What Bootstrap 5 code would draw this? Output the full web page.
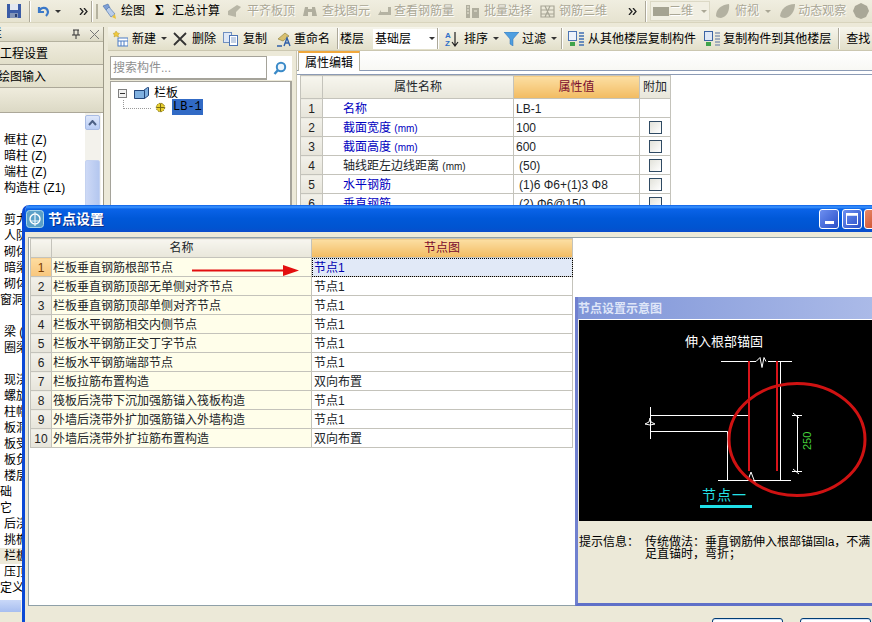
<!DOCTYPE html>
<html lang="zh-CN">
<head>
    <meta charset="UTF-8">
    <title>节点设置</title>
    <link href="https://cdn.jsdelivr.net/npm/bootstrap@5.3.0/dist/css/bootstrap.min.css" rel="stylesheet">
    <style>
        html, body { width: 872px; height: 622px; overflow: hidden; }
        body { position: relative; background: #ece9d8; color: #000; font: 12px/1 "Liberation Sans", "Noto Sans CJK SC", sans-serif; }
        svg { display: block; flex: none; }

        /* spacing between toolbar items, in px */
        .g1 { margin-left: 1px; } .g2 { margin-left: 2px; } .g3 { margin-left: 3px; } .g4 { margin-left: 4px; } .g5 { margin-left: 5px; }
        .g6 { margin-left: 6px; } .g7 { margin-left: 7px; } .g8 { margin-left: 8px; } .g9 { margin-left: 9px; }
        .g10 { margin-left: 10px; } .g11 { margin-left: 11px; } .g18 { margin-left: 18px; } .g21 { margin-left: 21px; }

        .top-bar { height: 23px; padding-left: 6px; background: linear-gradient(#f0eee0, #e6e3d0); border-bottom: 1px solid #d8d4bd; white-space: nowrap; }
        .sub-bar { height: 24px; padding-left: 5px; background: linear-gradient(#f6f5ec, #e2dfc9); border-bottom: 1px solid #cbc7b0; white-space: nowrap; }
        .bar-sep { width: 2px; height: 21px; flex: none; border-left: 1px solid #aca899; border-right: 1px solid #fff; }
        .bar-grip { width: 2px; height: 15px; flex: none; background: #b5b29f; }
        .drop-caret { width: 0; height: 0; flex: none; border-left: 3px solid transparent; border-right: 3px solid transparent; border-top: 3px solid #333; }
        .off { color: #aaa796; text-shadow: 1px 1px 0 #fff; }
        .off .drop-caret { border-top-color: #aaa796; }
        .sigma { width: 9px; font-size: 14px; font-weight: 700; font-family: "Liberation Serif", serif; }
        .view-box { width: 60px; height: 20px; padding-left: 2px; background: #f1efe3; border: 1px solid #dcd9c6; }
        .view-swatch { width: 16px; height: 9px; background: #a5a392; }
        .floor-box { width: 64px; height: 20px; padding-left: 2px; background: #fff; }

        .work-area { height: 598px; }
        .left-dock { width: 104px; flex: none; background: #ece9d8; border-right: 1px solid #9d9a88; }
        .dock-head { height: 15px; padding: 0 4px 0 0; background: linear-gradient(#f2f0e4, #dcd9c5); border-bottom: 1px solid #b5b29f; overflow: hidden; }
        .head-cut { margin-left: -10px; }
        .dock-tab { height: 23px; padding-top: 1px; background: linear-gradient(#efecdd, #e2dfca); border-bottom: 1px solid #aca899; overflow: hidden; white-space: nowrap; }
        .dock-tab-cut { text-indent: -2px; }
        .dock-blank { height: 25px; background: linear-gradient(#efecdd, #dcd9c5); border-bottom: 1px solid #aca899; }
        .dock-list { height: 487px; background: #fff; }
        .dock-tree { padding-top: 19px; width: 85px; overflow: hidden; }
        .tree-line { height: 16px; line-height: 16px; padding-left: 4px; white-space: nowrap; }
        .tree-cut { padding-left: 0; text-indent: -12px; }
        .tree-on { background: #ece9d8; }
        .dock-scroll { width: 16px; background: #f3f2ec; padding-top: 2px; }
        .scroll-up { width: 15px; height: 15px; background: linear-gradient(#dfe8fb, #b9cdf5); border: 1px solid #a9bce4; border-radius: 2px; }
        .scroll-thumb { width: 15px; height: 180px; margin-top: 30px; background: linear-gradient(90deg, #cdd9f6, #b4c7ef); border: 1px solid #c4d2f0; border-radius: 2px; }
        .dock-hscroll { height: 12px; background: #f3f2ec; }
        .hscroll-thumb { width: 21px; height: 12px; background: linear-gradient(#c9d8f8, #a7bef0); }

        .comp-pane { width: 188px; flex: none; padding: 5px 4px 0 2px; }
        .search-wrap { height: 24px; background: #fff; margin-bottom: 1px; }
        .search-field { width: 157px; height: 24px; padding: 0 2px; background: #fff; border: 1px solid #a5a39a; border-bottom-width: 2px; color: #8f8f8f; }
        .comp-tree { height: 540px; background: #fff; border: 1px solid #a5a39a; border-right-width: 2px; padding: 5px 0 0 7px; }
        .fold-box { width: 9px; height: 9px; border: 1px solid #808080; background: #f2f2f2; }
        .dot-l { width: 28px; height: 9px; margin: 0 0 6px 5px; border-left: 1px dotted #999; border-bottom: 1px dotted #999; flex: none; }
        .leaf-on { width: 31px; height: 16px; line-height: 16px; padding-left: 1px; background: #316ac5; font-family: "Liberation Mono", monospace; }
        .leaf-icon { margin-bottom: 2px; }

        .prop-pane { background: #fff; min-width: 0; border-left: 1px solid #c9c6b4; }
        .prop-tabs { height: 20px; padding-left: 1px; border-bottom: 1px solid #8c9bb5; background: linear-gradient(#fff, #f8f8f4); }
        .prop-tab { width: 62px; height: 20px; line-height: 20px; text-align: center; background: #fff; border: 1px solid #b5b29f; border-top: 2px solid #f0a83c; border-bottom: 0; }
        .prop-frame { margin-top: 3px; padding-left: 3px; border-top: 1px solid #8c9bb5; }

        .table.sheet { width: auto; margin: 0; table-layout: fixed; border-collapse: collapse; --bs-table-bg: transparent; }
        .table.sheet th, .table.sheet td { height: 19px; padding: 0 2px; border: 1px solid #c4c3bb; font-size: 12px; font-weight: 400; line-height: 1; vertical-align: middle; white-space: nowrap; overflow: hidden; }
        .table.sheet td { padding-top: 1px; }
        .table.sheet th { text-align: center; background: linear-gradient(#f7f6ef, #e8e6da); }
        .table.sheet th.head-on { background: linear-gradient(#fcdfa3, #f2bb61); color: #7a0c2e; }
        .table.sheet td.num-cell { text-align: center; background: linear-gradient(#f2f1ea, #e6e4da); color: #222; }
        .table.sheet td.num-on { background: linear-gradient(#fddca0, #f8c67c); color: #7a3b00; }
        .table.sheet td.name-cell { padding-left: 1px; background: #fffeea; }
        .table.sheet td.val-on { background: #e1e9f7; color: #0000b0; outline: 1px dotted #000; outline-offset: -1px; }
        .prop-sheet { height: 114px; }
        .prop-sheet th:nth-child(1) { width: 22px; }
        .prop-sheet th:nth-child(2) { width: 191px; }
        .prop-sheet th:nth-child(3) { width: 126px; }
        .prop-sheet th:nth-child(4) { width: 31px; }
        .node-sheet .n-col { width: 21px; }
        .node-sheet .t-col { width: 260px; }
        .node-sheet .v-col { width: 261px; }
        .table.sheet td.attr-blue { padding-left: 20px; color: #0000c0; }
        .table.sheet td.attr-plain { padding-left: 20px; }
        .table.sheet td.val-off { padding-left: 5px; }
        .table.sheet th.pt-head { height: 23px; }
        .mm { font-size: 10px; }
        .chk-cell { text-align: center; }
        .fake-check { display: block; width: 13px; height: 13px; margin: 0 auto; border: 1px solid #2f4a63; background: linear-gradient(135deg, #e2e2da, #fff); }

        /* dialog window sits over the application */
        .node-win { position: absolute; left: 22px; top: 205px; width: 866px; height: 440px; background: #ece9d8; border-left: 3px solid #0b49d6; border-radius: 7px 7px 0 0; overflow: hidden; }
        .win-title { height: 27px; margin-left: -3px; padding-left: 4px; background: linear-gradient(#0a5fe6 0, #3d95ff 2px, #0a63e8 4px, #0058d8 50%, #0054d0 85%, #0a4ccc 100%); border-radius: 7px 7px 0 0; color: #fff; font-size: 14px; font-weight: 700; text-shadow: 1px 1px 0 #0a2f8a; }
        .win-label { margin-top: 1px; }
        .win-btn { width: 20px; height: 20px; border: 1px solid #fff; border-radius: 3px; background: linear-gradient(135deg, #6d8ff0, #2a50c8); }
        .win-close { background: linear-gradient(135deg, #e88a6a, #c8401c); }
        .win-inner { height: 369px; margin: 5px 0 0 3px; padding: 0 0 0 1px; background: #fff; border-top: 1px solid #8fa0a8; border-bottom: 1px solid #8fa0a8; border-left: 1px solid #8fa0a8; }
        .node-col { flex: none; }
        .hint-pane { width: 320px; flex: none; margin: 59px 0 0 2px; height: 309px; background: #ece9d8; border-left: 3px solid #7080cf; border-bottom: 3px solid #5f70c8; }
        .hint-title { height: 22px; padding-top: 2px; background: linear-gradient(90deg, #7f95d8, #aebde9); color: #dfe6f8; font-weight: 700; }
        .hint-art { margin-left: 1px; border-top: 1px solid #fff; }
        .hint-note { padding: 15px 0 0 1px; line-height: 12px; white-space: nowrap; }
        .hint-label { width: 66px; flex: none; }
        .win-foot { padding: 12px 17px 0 0; }
        .win-foot .btn { width: 71px; height: 23px; padding: 0; margin-left: 17px; background: #fff; border: 1px solid #003c74; border-radius: 3px; font-size: 12px; color: #000; box-shadow: inset 0 1px 0 #cfe0f8; }
        .flow-arrow { position: absolute; left: 167px; top: 60px; }
    </style>
</head>
<body>

<div class="top-bar d-flex align-items-center">
    <svg width="16" height="16" viewBox="0 0 16 16"><rect x="1" y="1" width="14" height="14" fill="#3b5ca6"/><rect x="4" y="1" width="8" height="6" fill="#e3e8f0"/><rect x="4" y="10" width="8" height="5" fill="#8194b8"/><rect x="9" y="11" width="2" height="3" fill="#2b3f70"/></svg>
    <span class="bar-sep g7"></span>
    <svg class="g5" width="14" height="14" viewBox="0 0 14 14"><path d="M3 3 v5 h5 M3 8 C4 3 11 2 12 8 c0 2 -1 3 -2 4" fill="none" stroke="#3a78c8" stroke-width="2.2"/></svg>
    <span class="drop-caret g5"></span>
    <svg class="g18" width="9" height="7" viewBox="0 0 9 7"><path d="M1 0 l3 3.5 -3 3.5 M5 0 l3 3.5 -3 3.5" fill="none" stroke="#222" stroke-width="1.3"/></svg>
    <span class="bar-sep g3"></span>
    <span class="bar-grip g3"></span>

    <svg class="g3" width="17" height="17" viewBox="0 0 17 17"><path d="M2 3 l5 -2 2 4 -4 2z" fill="#7d9fd6" stroke="#466ea8" stroke-width=".6"/><path d="M5 7 l5 7 4 -3 -6 -7z" fill="#b9cdea" stroke="#466ea8" stroke-width=".6"/><path d="M11 14 l4 2 -1 -5z" fill="#e8c23e"/></svg>
    <span class="g3">绘图</span>
    <span class="sigma g10">Σ</span>
    <span class="g8">汇总计算</span>

    <svg class="g7" width="16" height="16" viewBox="0 0 16 16"><path d="M1 8 l9 -6 4 2 -5 5 v5 l-8 -2z" fill="#b8b6a6"/></svg>
    <span class="off g4">平齐板顶</span>
    <svg class="g7" width="16" height="14" viewBox="0 0 16 14"><path d="M1 12 l2 -9 h3 v9z M15 12 l-2 -9 h-3 v9z M6 5 h4 v3 h-4z" fill="#b0ae9e"/></svg>
    <span class="off g4">查找图元</span>
    <svg class="g8" width="13" height="10" viewBox="0 0 13 10"><path d="M0 9 h13 v-8 h-3 v5 h-7 v-2z" fill="#b5b3a3"/></svg>
    <span class="off g3">查看钢筋量</span>
    <svg class="g11" width="15" height="15" viewBox="0 0 15 15"><path d="M1 1 h4 v13 h-4z M7 4 h7 v10 h-7z" fill="#b0ae9e"/><path d="M2 3 h2 M2 6 h2 M2 9 h2 M9 7 h3" stroke="#ece9d8"/></svg>
    <span class="off g4">批量选择</span>
    <svg class="g8" width="15" height="15" viewBox="0 0 15 15"><path d="M1 2 h13 v11 h-13z M1 6 h13 M1 10 h13 M5 2 l5 11 M10 2 l-5 11" fill="none" stroke="#a8a696" stroke-width="1.2"/></svg>
    <span class="off g4">钢筋三维</span>
    <svg class="g21" width="9" height="7" viewBox="0 0 9 7"><path d="M1 0 l3 3.5 -3 3.5 M5 0 l3 3.5 -3 3.5" fill="none" stroke="#222" stroke-width="1.3"/></svg>
    <span class="bar-sep g8"></span>

    <span class="view-box off d-flex align-items-center g3">
        <span class="view-swatch"></span>
        <span>二维</span>
        <span class="drop-caret g8"></span>
    </span>
    <svg class="g5" width="15" height="16" viewBox="0 0 15 16"><path d="M1 13 c0 -7 5 -11 13 -12 c1 6 -2 13 -8 14 c-3 0 -4 -1 -5 -2z" fill="#b3b1a1"/></svg>
    <span class="off g5">俯视</span>
    <span class="off d-flex g6"><span class="drop-caret"></span></span>
    <svg class="g8" width="17" height="16" viewBox="0 0 17 16"><path d="M1 13 c1 -7 6 -12 15 -12 c0 7 -4 13 -10 14 c-3 0 -4 -1 -5 -2z" fill="#b3b1a1"/></svg>
    <span class="off g2">动态观察</span>
    <svg class="g7" width="16" height="16" viewBox="0 0 16 16"><path d="M8 0 l6 3 2 5 -3 6 -5 2 -5 -2 -3 -6 2 -5z" fill="#a9a797"/></svg>
</div>

<div class="work-area d-flex">
    <div class="left-dock mt-1 d-flex flex-column">
        <div class="dock-head d-flex align-items-center gap-2">
            <span class="head-cut me-auto">栏</span>
            <svg width="8" height="10" viewBox="0 0 8 10"><path d="M1 1 h6 M2 1 v5 M6 1 v5 M0 6 h8 M4 6 v4" fill="none" stroke="#333"/></svg>
            <svg class="g2" width="9" height="9" viewBox="0 0 9 9"><path d="M0 0 l9 9 M9 0 l-9 9" stroke="#777"/></svg>
        </div>
        <div class="dock-tab d-flex align-items-center">工程设置</div>
        <div class="dock-tab dock-tab-cut d-flex align-items-center">绘图输入</div>
        <div class="dock-blank"></div>
        <div class="dock-list d-flex">
            <div class="dock-tree">
                <div class="tree-line">框柱 (Z)</div>
                <div class="tree-line">暗柱 (Z)</div>
                <div class="tree-line">端柱 (Z)</div>
                <div class="tree-line">构造柱 (Z1)</div>
                <div class="tree-line">&nbsp;</div>
                <div class="tree-line">剪力墙 (Q)</div>
                <div class="tree-line">人防门框墙</div>
                <div class="tree-line">砌体墙</div>
                <div class="tree-line">暗梁</div>
                <div class="tree-line">砌体加筋</div>
                <div class="tree-line tree-cut">门窗洞</div>
                <div class="tree-line">&nbsp;</div>
                <div class="tree-line">梁 (L)</div>
                <div class="tree-line">圈梁</div>
                <div class="tree-line">&nbsp;</div>
                <div class="tree-line">现浇板</div>
                <div class="tree-line">螺旋板</div>
                <div class="tree-line">柱帽</div>
                <div class="tree-line">板洞</div>
                <div class="tree-line">板受力筋</div>
                <div class="tree-line">板负筋</div>
                <div class="tree-line">楼层板带</div>
                <div class="tree-line tree-cut">基础</div>
                <div class="tree-line tree-cut">其它</div>
                <div class="tree-line">后浇带</div>
                <div class="tree-line">挑檐</div>
                <div class="tree-line tree-on">栏板</div>
                <div class="tree-line">压顶</div>
                <div class="tree-line tree-cut">自定义</div>
            </div>
            <div class="dock-scroll">
                <div class="scroll-up d-flex align-items-center justify-content-center">
                    <svg width="9" height="6" viewBox="0 0 9 6"><path d="M1 5 l3.5 -4 3.5 4" fill="none" stroke="#4d6185" stroke-width="2"/></svg>
                </div>
                <div class="scroll-thumb"></div>
            </div>
        </div>
        <div class="dock-hscroll"><div class="hscroll-thumb"></div></div>
    </div>

    <div class="flex-grow-1 d-flex flex-column mt-1 ps-1">
        <div class="sub-bar d-flex align-items-center">
            <svg width="15" height="16" viewBox="0 0 15 16"><path d="M3 0 l1.500 2 2 .5 -1.500 1.500 .5 2 -2.500 -1 -2 1 .5 -2 -1.500 -1.500 2 -.5z" fill="#f0c93c" stroke="#a98a18" stroke-width=".4"/><rect x="5" y="7" width="10" height="8" fill="#fff" stroke="#4c7cc4"/><path d="M5 10 h10 M8 10 v5 M11 10 v5" stroke="#4c7cc4"/></svg>
            <span class="g4">新建</span>
            <span class="drop-caret g5"></span>
            <svg class="g6" width="14" height="14" viewBox="0 0 14 14"><path d="M1 1 l12 12 M13 1 l-12 12" stroke="#333" stroke-width="1.8"/></svg>
            <span class="g5">删除</span>
            <svg class="g7" width="15" height="14" viewBox="0 0 15 14"><rect x="0.500" y="0.500" width="8" height="10" fill="#dfe8f6" stroke="#6f8fc0"/><rect x="6.500" y="3.500" width="8" height="10" fill="#fff" stroke="#4c74b4"/><path d="M8 6 h5 M8 8 h5 M8 10 h5" stroke="#8aa4cc"/></svg>
            <span class="g5">复制</span>
            <svg class="g8" width="16" height="16" viewBox="0 0 16 16"><path d="M3 8 l7 -6 4 3 -6 5z" fill="#d8c070" stroke="#8a7a30" stroke-width=".6"/><path d="M9 15 l3 -8 3 8 M10 12 h4" fill="none" stroke="#2f5fa8" stroke-width="1.4"/><path d="M2 15 h5" stroke="#2f5fa8" stroke-width="1.500"/></svg>
            <span class="g3">重命名</span>
            <span class="bar-sep g7"></span>
            <span class="g1">楼层</span>
            <span class="floor-box d-flex align-items-center g9">
                <span>基础层</span>
                <span class="drop-caret g18"></span>
            </span>
            <span class="bar-sep"></span>
            <svg class="g5" width="15" height="16" viewBox="0 0 15 16"><path d="M11 1 v13 M8 11 l3 4 3 -4" fill="none" stroke="#222" stroke-width="1.200"/><text x="1" y="7" font-size="8" fill="#2f6fc8" font-weight="700">A</text><text x="1" y="15" font-size="8" fill="#2f6fc8" font-weight="700">Z</text></svg>
            <span class="g5">排序</span>
            <span class="drop-caret g5"></span>
            <svg class="g5" width="15" height="14" viewBox="0 0 15 14"><path d="M0 0 h15 l-6 7 v7 l-3 -2 v-5z" fill="#4f9fe0" stroke="#2f6fb0" stroke-width=".5"/></svg>
            <span class="g3">过滤</span>
            <span class="drop-caret g5"></span>
            <span class="bar-sep g4"></span>
            <svg class="g5" width="16" height="16" viewBox="0 0 16 16"><rect x="0.500" y="0.500" width="8" height="9" fill="#eef3fb" stroke="#4c74b4"/><path d="M2 11 h5 v4 h-5z" fill="#3fa34a"/><path d="M11 2 h5 M11 5 h5 M11 8 h5 M11 11 h5 M11 14 h5" stroke="#3f6fb4" stroke-width="1.500"/></svg>
            <span class="g4">从其他楼层复制构件</span>
            <svg class="g8" width="16" height="16" viewBox="0 0 16 16"><rect x="0.500" y="0.500" width="8" height="9" fill="#dfe8f6" stroke="#3c64a4"/><path d="M2 11 h5 v4 h-5z" fill="#3fa34a"/><path d="M11 2 h5 M11 5 h5 M11 8 h5 M11 11 h5 M11 14 h5" stroke="#8a9ab4" stroke-width="1.500"/></svg>
            <span class="g3">复制构件到其他楼层</span>
            <span class="bar-sep g7"></span>
            <span class="g6">查找</span>
        </div>

        <div class="d-flex flex-grow-1">
            <div class="comp-pane">
                <div class="search-wrap d-flex">
                    <div class="search-field d-flex align-items-center">搜索构件...</div>
                    <div class="flex-grow-1 d-flex align-items-center justify-content-center">
                        <svg width="14" height="14" viewBox="0 0 14 14"><circle cx="8" cy="6" r="4.200" fill="#eef6fc" stroke="#3a8ac8" stroke-width="2"/><path d="M5 9 l-3.500 4" stroke="#3a8ac8" stroke-width="2.400"/></svg>
                    </div>
                </div>
                <div class="comp-tree">
                    <div class="d-flex align-items-center">
                        <span class="fold-box d-flex align-items-center justify-content-center"><svg width="5" height="1" viewBox="0 0 5 1"><rect width="5" height="1" fill="#333"/></svg></span>
                        <svg class="g7" width="15" height="12" viewBox="0 0 15 12"><path d="M0.500 3.500 h9 l4 -3 h1 v8 l-4 3 h-10z" fill="#7fb0e0" stroke="#22457a"/><path d="M0.500 3.500 h10 v8" fill="none" stroke="#22457a"/></svg>
                        <span class="g5">栏板</span>
                    </div>
                    <div class="d-flex align-items-end">
                        <span class="dot-l"></span>
                        <svg class="g4 leaf-icon" width="11" height="11" viewBox="0 0 11 11"><circle cx="5.500" cy="5.500" r="4.200" fill="#e8d030" stroke="#7a6a10" stroke-dasharray="1.500 1"/><path d="M1.500 5.500 h8 M5.500 1.500 v8" stroke="#7a6a10"/></svg>
                        <span class="leaf-on g6">LB-1</span>
                    </div>
                </div>
            </div>

            <div class="prop-pane flex-grow-1">
                <div class="prop-tabs"><div class="prop-tab">属性编辑</div></div>
                <div class="prop-frame">
                    <table class="table sheet prop-sheet">
                        <thead>
                            <tr><th class="pt-head"></th><th class="pt-head">属性名称</th><th class="pt-head head-on">属性值</th><th class="pt-head">附加</th></tr>
                        </thead>
                        <tbody>
                            <tr><td class="num-cell">1</td><td class="attr-blue">名称</td><td>LB-1</td><td></td></tr>
                            <tr><td class="num-cell">2</td><td class="attr-blue">截面宽度 <span class="mm">(mm)</span></td><td>100</td><td class="chk-cell"><span class="fake-check"></span></td></tr>
                            <tr><td class="num-cell">3</td><td class="attr-blue">截面高度 <span class="mm">(mm)</span></td><td>600</td><td class="chk-cell"><span class="fake-check"></span></td></tr>
                            <tr><td class="num-cell">4</td><td class="attr-plain">轴线距左边线距离 <span class="mm">(mm)</span></td><td class="val-off">(50)</td><td class="chk-cell"><span class="fake-check"></span></td></tr>
                            <tr><td class="num-cell">5</td><td class="attr-blue">水平钢筋</td><td class="val-off">(1)6 Φ6+(1)3 Φ8</td><td class="chk-cell"><span class="fake-check"></span></td></tr>
                            <tr><td class="num-cell">6</td><td class="attr-blue">垂直钢筋</td><td class="val-off">(2) Φ6@150</td><td class="chk-cell"><span class="fake-check"></span></td></tr>
                        </tbody>
                    </table>
                </div>
            </div>
        </div>
    </div>
</div>

<div class="node-win">
    <div class="win-title d-flex align-items-center">
        <svg width="18" height="18" viewBox="0 0 18 18"><rect x="0.500" y="0.500" width="17" height="17" rx="3" fill="#5aa0c8" stroke="#a8d4e8"/><circle cx="9" cy="9" r="5" fill="none" stroke="#fff" stroke-width="1.400"/><path d="M9 2 v14 M5 11 h8" stroke="#e8f4fa" stroke-width="1.200"/></svg>
        <span class="g4 win-label">节点设置</span>
        <span class="win-btn d-flex align-items-end justify-content-center ms-auto pb-1"><svg width="9" height="3" viewBox="0 0 9 3"><rect width="9" height="3" fill="#fff"/></svg></span>
        <span class="win-btn d-flex align-items-center justify-content-center g3"><svg width="12" height="12" viewBox="0 0 12 12"><path d="M0.500 2 h11 v9.500 h-11z" fill="none" stroke="#fff"/><rect width="12" height="2.500" fill="#fff"/></svg></span>
        <span class="win-btn win-close g2 me-1"></span>
    </div>
    <div class="win-inner d-flex">
        <div class="node-col">
            <table class="table sheet node-sheet">
                <thead>
                    <tr><th class="n-col"></th><th class="t-col">名称</th><th class="v-col head-on">节点图</th></tr>
                </thead>
                <tbody>
                    <tr><td class="num-cell num-on">1</td><td class="name-cell">栏板垂直钢筋根部节点</td><td class="val-on">节点1</td></tr>
                    <tr><td class="num-cell">2</td><td class="name-cell">栏板垂直钢筋顶部无单侧对齐节点</td><td>节点1</td></tr>
                    <tr><td class="num-cell">3</td><td class="name-cell">栏板垂直钢筋顶部单侧对齐节点</td><td>节点1</td></tr>
                    <tr><td class="num-cell">4</td><td class="name-cell">栏板水平钢筋相交内侧节点</td><td>节点1</td></tr>
                    <tr><td class="num-cell">5</td><td class="name-cell">栏板水平钢筋正交丁字节点</td><td>节点1</td></tr>
                    <tr><td class="num-cell">6</td><td class="name-cell">栏板水平钢筋端部节点</td><td>节点1</td></tr>
                    <tr><td class="num-cell">7</td><td class="name-cell">栏板拉筋布置构造</td><td>双向布置</td></tr>
                    <tr><td class="num-cell">8</td><td class="name-cell">筏板后浇带下沉加强筋锚入筏板构造</td><td>节点1</td></tr>
                    <tr><td class="num-cell">9</td><td class="name-cell">外墙后浇带外扩加强筋锚入外墙构造</td><td>节点1</td></tr>
                    <tr><td class="num-cell">10</td><td class="name-cell">外墙后浇带外扩拉筋布置构造</td><td>双向布置</td></tr>
                </tbody>
            </table>
        </div>
        <div class="hint-pane">
            <div class="hint-title d-flex align-items-center">节点设置示意图</div>
            <div class="hint-art">
                <svg width="300" height="201" viewBox="579 319 300 201">
                    <rect x="579" y="319" width="300" height="201" fill="#000"/>
                    <text x="685" y="345" font-size="13" fill="#fff">伸入根部锚固</text>
                    <g fill="none" stroke="#fff" stroke-width="1">
                        <path d="M721 360.500 H756 M768 360.500 H792"/>
                        <path d="M756 360.500 l4 -4 2 10 2 -10 2 4"/>
                        <path d="M748.500 360 V414.500 H650 M650.500 406 V438 M650 430.500 H727.500 V479.500 M718 479.500 H791 M780.500 360 V479.500"/>
                        <path d="M645 423 l4 -2 1 -4 1 4 l4 2 -5 1 z"/>
                        <path d="M748 479 l3 -8 3 8 2 4"/>
                        <path d="M797.500 414 V470 M792 414.500 H802 M792 470.500 H802 M793 412 l6 5 M793 468 l6 5"/>
                    </g>
                    <path d="M749 360 V470 M777 360 V470" stroke="#d8141a" stroke-width="2"/>
                    <text transform="translate(811 449) rotate(-90)" font-size="11" fill="#46d23c">250</text>
                    <text x="702" y="499" font-size="14" letter-spacing="1" fill="#25e0e6">节点一</text>
                    <rect x="700" y="504" width="52" height="3" fill="#1fe0e8"/>
                    <ellipse cx="797" cy="438.500" rx="68" ry="56" fill="none" stroke="#cf1212" stroke-width="3"/>
                </svg>
            </div>
            <div class="hint-note d-flex">
                <span class="hint-label">提示信息：</span>
                <span>传统做法：垂直钢筋伸入根部锚固la，不满<br>足直锚时，弯折；</span>
            </div>
        </div>
    </div>
    <div class="win-foot d-flex justify-content-end">
        <button type="button" class="btn">确定</button>
        <button type="button" class="btn">取消</button>
    </div>
    <svg class="flow-arrow" width="107" height="11" viewBox="0 0 107 11"><path d="M0 4.500 H91 V0 L107 5.500 L91 11 V6.500 H0z" fill="#e30f0f"/></svg>
</div>

<script src="https://cdn.jsdelivr.net/npm/bootstrap@5.3.0/dist/js/bootstrap.bundle.min.js"></script>
</body>
</html>
